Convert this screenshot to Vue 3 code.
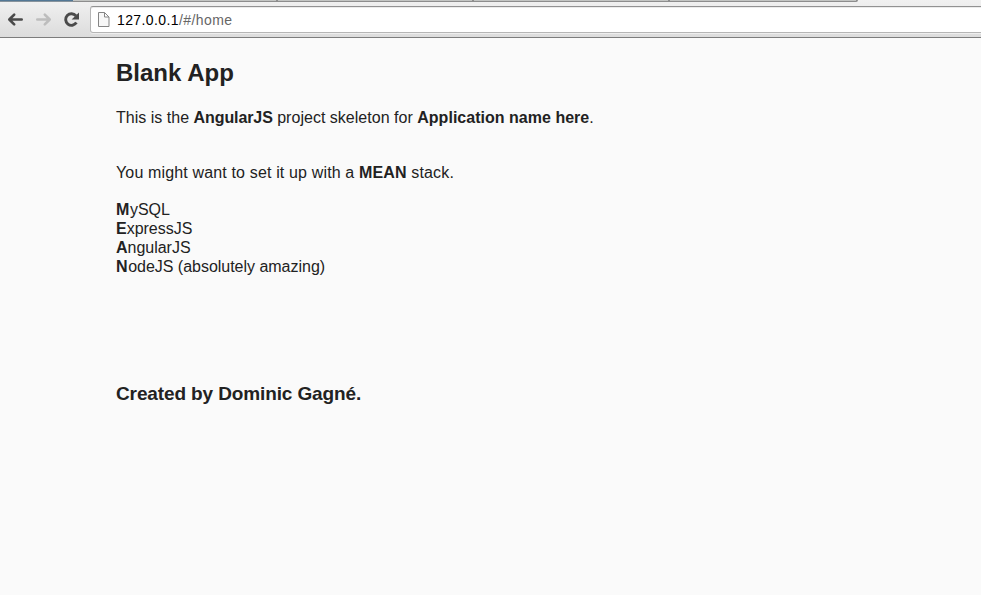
<script setup>
const stack = [
  { initial: 'M', rest: 'ySQL' },
  { initial: 'E', rest: 'xpressJS' },
  { initial: 'A', rest: 'ngularJS' },
  { initial: 'N', rest: 'odeJS (absolutely amazing)' },
]
</script>

<template>
  <div class="window">
    <header class="chrome">
      <div class="tabs">
        <span class="tab active"></span>
        <span class="tab first"></span>
        <span class="tab"></span>
        <span class="tab"></span>
        <span class="tab last"></span>
      </div>
      <div class="toolbar">
        <svg class="nav" width="90" height="30" viewBox="0 0 90 30">
          <g fill="none" stroke-width="2.6" stroke-linecap="round" stroke-linejoin="round">
            <path stroke="#4a4a4a" d="M21.7 13.5H9.8M14.2 8.6L9.3 13.5L14.2 18.4" />
            <path stroke="#bdbdbd" d="M37.3 13.5H49.2M44.8 8.6L49.7 13.5L44.8 18.4" />
            <path stroke="#4a4a4a" stroke-width="2.9" stroke-linecap="butt" d="M75.9 9.8A5.8 5.8 0 1 0 76.4 16.6" />
          </g>
          <path fill="#4a4a4a" d="M79 6.4V13.4H71.6Z" />
        </svg>
        <div class="address">
          <svg class="page" width="13" height="17" viewBox="0 0 13 17">
            <path fill="#f7f7f7" stroke="#858585" d="M1.5 1.5H7.5L12 6V15.5H1.5ZM7.5 1.5V6H12" />
          </svg>
          <span class="url">127.0.0.1<span class="path">/#/home</span></span>
        </div>
      </div>
    </header>
    <main class="content">
      <h1>Blank App</h1>
      <p class="intro">This is the <b class="name">AngularJS</b> project skeleton for <b>Application name here</b>.</p>
      <p class="advice">You might want to set it up with a <b>MEAN</b> stack.</p>
      <ul>
        <li v-for="item in stack" :key="item.initial"><b>{{ item.initial }}</b>{{ item.rest }}</li>
      </ul>
      <h3>Created by Dominic Gagné.</h3>
    </main>
  </div>
</template>

<style>
body { background: #fafafa; }
</style>

<style scoped>
.window {
  height: 595px;
  overflow: hidden;
  background: #fafafa;
  color: #222;
  font: 16px/19px "Liberation Sans", Arial, sans-serif;
}
.chrome {
  box-sizing: border-box;
  height: 38px;
  border-bottom: 1px solid #7c7c7c;
  background: linear-gradient(#f1f1f1, #dcdcdc);
}
.tabs { display: flex; height: 2px; }
.tab {
  box-sizing: border-box;
  width: 196px;
  background: #c3c5c3;
  border-right: 2px solid #8d8d8d;
  border-bottom: 1px solid #8d8d8d;
}
.tab.active { width: 73px; background: #527795; border-right: 0; border-bottom-color: #87939c; }
.tab.first { width: 205px; }
.tab.last { width: 188px; border-radius: 0 0 2px 0; }
.toolbar { display: flex; padding-top: 4px; }
.nav { display: block; flex: none; }
.address {
  box-sizing: border-box;
  display: flex;
  align-items: center;
  flex: 1;
  height: 27px;
  margin-right: -4px;
  padding-left: 6px;
  border: 1px solid #b5b5b5;
  border-top-color: #929292;
  border-radius: 3px;
  background: #fff;
  box-shadow: inset 0 1px 0 #ececec, 0 1px 0 #eee;
}
.page { flex: none; margin-right: 7px; }
.url { padding-top: 1px; color: #000; font-size: 14px; letter-spacing: 0.4px; }
.path { color: #666; }
.content { padding: 21px 0 0 116px; }
h1 { margin: 0; font-size: 24px; line-height: 28px; }
p { margin: 0; }
.intro { margin-top: 21px; letter-spacing: 0.02px; }
.intro .name { letter-spacing: -0.1px; }
.advice { margin-top: 36px; letter-spacing: 0.15px; }
ul { margin: 18px 0 0; padding: 0; list-style: none; letter-spacing: -0.02px; }
li b { letter-spacing: 0.6px; }
li:nth-child(2) b, li:nth-child(3) b { letter-spacing: 0; }
h3 { margin: 107px 0 0; font-size: 19px; line-height: 22px; letter-spacing: -0.12px; }
</style>
